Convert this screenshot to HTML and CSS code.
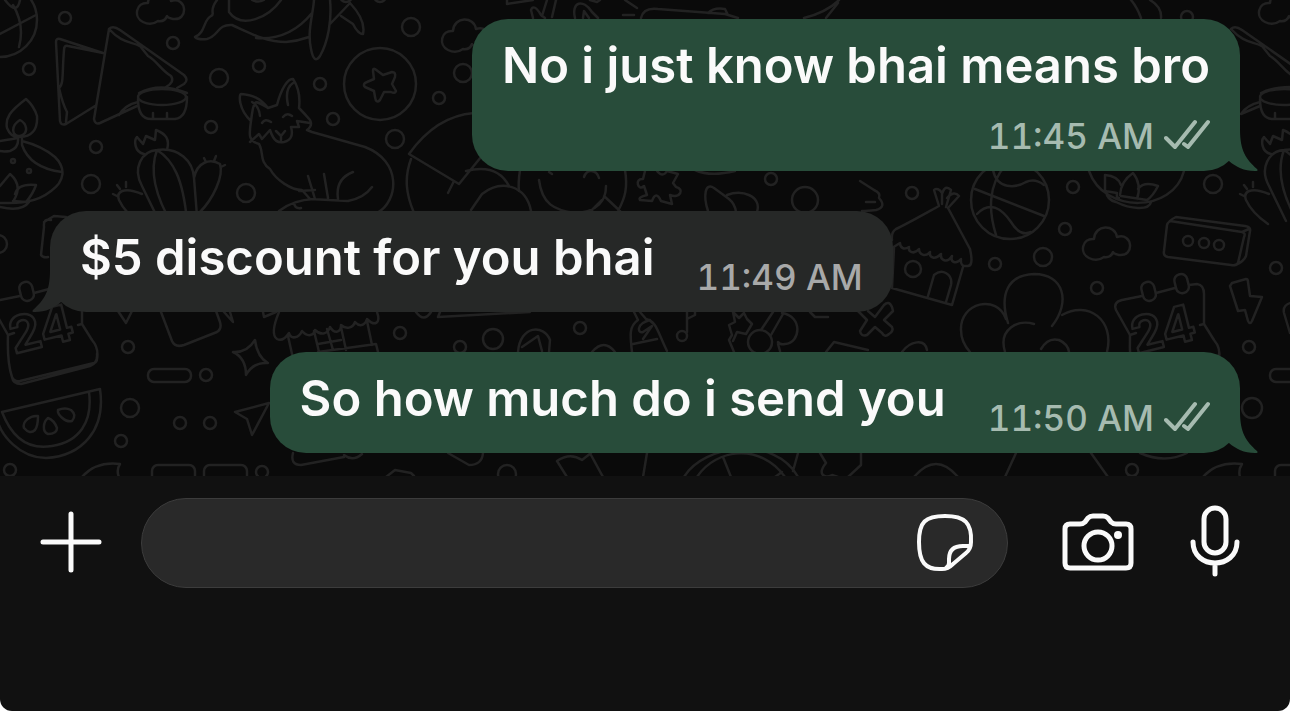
FILE: index.html
```html
<!DOCTYPE html>
<html lang="en">
<head>
    <meta charset="UTF-8">
    <meta name="viewport" content="width=device-width, initial-scale=1.0">
    <title>Chat</title>
    <link rel="stylesheet" href="styles.css">
</head>
<body>
    <div class="app">
        <main class="chat">
            <!-- Doodle wallpaper -->
            <svg class="wallpaper" viewBox="0 0 1290 476" preserveAspectRatio="xMidYMin slice" aria-hidden="true">
                <defs>
                    <g id="calendar">
                        <path d="M0 20Q-9 22-6 30L8 55L14 53M0 20L20 16M34 13L53 8M67 5L75 4Q82 5 82 14V44L92 60Q99 68 97 79Q97 82 94 83L20 101Q14 102 12 97Q7 82 8 55M82 44L78 45M12 97Q13 104 21 104L90 86Q98 83 97 74"/>
                        <rect x="20" y="2" width="13" height="19" rx="6" transform="rotate(-14 26 11)"/>
                        <rect x="53" y="-6" width="13" height="19" rx="6" transform="rotate(-14 60 3)"/>
                        <text x="14" y="74" transform="rotate(-14 14 74)">24</text>
                    </g>
                    <g id="cloud">
                        <path d="M11 11C12-4 32-4 34 9C50 4 52 29 36 27Q31 26 30 24Q28 30 21 29Q14 34 6 30C-4 25-1 10 11 11Z"/>
                    </g>
                    <g id="cactus">
                        <path d="M5 50C-5 32 5 15 20 14C42 11 56 25 57 42L60 80M20 14C12 35 18 60 36 90M20 14C36 24 46 42 50 85M5 50L22 85M57 42C60 26 73 22 83 28C87 40 76 63 63 76M7 18C-3 16-3 4 0 1L6 8L9 0L18 4L19-6C29-2 33 3 30 14M5 58C-14 50-21 56-18 64Q-12 77 4 88M-17 53L-20 49M-11 51V46M-20 60L-24 58M69 26L67 22M77 25L79 20M84 31L88 29"/>
                    </g>
                </defs>

                <circle cx="0" cy="20" r="37"/>
                <path d="M0 34L36 15M13 5Q25 25 19 47M5 0Q17 16 20 0"/>
                <use href="#cloud" x="137" y="-8"/>

                <!-- Napkins and bowl -->
                <path d="M103 53L60 39Q56 38 56 42L60 121Q61 126 66 124L95 106M103 53L68 46Q64 45 64 50C62 73 64 84 59 88Q63 105 67 112L66 122M109 29Q113 25 120 30L184 75Q189 80 184 84L177 88M109 29L94 119Q95 125 100 123L137 106M109 29C122 43 129 41 140 46L148 56C157 61 161 70 171 76Q175 82 166 87M119 115Q125 105 138 102"/>
                <ellipse cx="162" cy="97" rx="24" ry="8"/>
                <path d="M138 99C138 114 143 119 151 119H175C184 118 187 108 187 97M139 93Q160 82 187 93M153 113V118M167 113V118"/>

                <!-- Whale -->
                <path d="M217 0C208 12 216 14 211 16C203 20 206 32 195 37Q198 40 207 39C219 36 217 24 232 25C250 33 265 42 286 42Q298 41 309 37M229 0V12C242 30 269 17 281 0M256 38C281 40 299 29 312 13M314 0C313 15 307 31 311 49Q314 65 320 56C328 42 332 20 330 0M330 24L350 3Q366 20 363 34Q358 34 353 24L341 16"/>
                <path d="M252 0Q258 3 264 0"/>

                <!-- Star coin -->
                <circle cx="380" cy="84" r="36"/>
                <path d="M375 69L383 75L392 72Q396 72 395 77L392 84L396 91Q395 94 391 92L384 92L380 100Q376 104 375 97L374 91L365 87Q362 84 367 82L374 79L373 71Q373 68 375 69Z"/>

                <!-- Fox -->
                <path d="M268 108C255 101 254 96 251 121C238 109 239 94 241 94C253 95 260 98 268 108ZM268 108L277 105C281 89 288 78 293 79C299 88 300 100 299 108Q304 113 310 120Q313 126 307 130L312 132L365 147C402 161 399 201 377 213M251 121C249 135 248 141 259 144C264 152 259 162 270 169C276 180 291 190 302 190L310 199L348 201Q364 198 372 187M252 102Q259 106 260 116M288 105C286 96 287 87 293 83M250 142L259 134L262 139L270 130C274 142 278 143 284 142C292 140 293 134 291 127L299 127L297 121L310 123M276 131L281 136L285 131M281 136V140M262 123Q265 118 271 122M283 117Q287 112 292 116M308 176L315 199M324 174L328 198M353 172Q335 179 338 199M299 191L315 190M279 211Q293 200 314 199M294 203Q295 209 301 208"/>

                <!-- Lamp -->
                <path d="M26 99C10 111 5 118 7 128Q11 138 20 137C31 137 38 130 37 116Q34 106 26 99ZM20 120C10 126 12 137 20 136C30 133 26 123 20 120ZM0 141Q13 139 18 138Q19 148 10 151Q4 152 0 151M22 139V145Q30 168 62 172M22 141Q42 146 55 157C66 168 65 181 51 191C36 203 20 203 0 203M0 186L10 174Q23 185 14 200M15 194Q18 183 36 185Q33 194 26 202L13 201M29 202Q22 212 0 207"/>
                <circle cx="13" cy="161" r="2"/>
                <circle cx="29" cy="171" r="2"/>
                <use href="#cactus" x="137" y="136"/>

                <!-- Parasol, smiley, puzzle -->
                <path d="M409 154Q436 116 474 113M409 154L459 184L481 157M411 159C404 178 406 194 414 213M454 181L448 193M466 171Q497 163 509 186M471 210L482 194C501 179 526 185 531 211"/>
                <path d="M519 191Q518 183 520 170M625 170C628 188 625 198 618 211M539 180C542 204 554 210 575 213C598 212 606 200 606 186M549 172L552 174M584 177Q586 171 591 171Q597 171 599 178M604 196L620 211M592 210L602 200"/>
                <path d="M645 171L643 179C634 178 638 192 644 186L647 195Q638 197 640 200L652 201Q656 190 661 201L672 204L670 195C680 199 685 189 676 187L673 183L678 174L667 171Q663 178 657 171"/>
                <path d="M708 211C703 196 705 182 714 188L729 199Q735 204 736 212M727 195C742 189 762 196 757 212M695 170Q710 177 735 171"/>

                <!-- Objects along the top -->
                <path d="M507 0V4L533 0M533 18L531 10Q534 3 541 15L545 18M542 16L547 0M552 17L556 0M575 18C571 2 583-2 592 12L598 18M583 18L584 11L589 18M590 0L597 2L600 0M625 0L637 8M623 15H634M641 18C643 9 650 8 658 9L725 14L738 18M708 13Q714 7 725 9L728 15M804 18Q827 12 839 0M826 18L838 3"/>
                <use href="#cloud" x="442" y="20"/>
                <use href="#cloud" x="1259" y="-8"/>

                <!-- Gift and photo behind the grey bubble -->
                <path d="M51 220Q43 218 44 227L41 255Q43 258 48 257M44 222L54 216L66 217M118 311L126 323L132 311M161 312L172 341Q175 348 184 345L217 332Q222 329 220 322L216 311M224 312L233 322L230 312"/>
                <use href="#calendar" x="0" y="280"/>

                <!-- Hut roof -->
                <path d="M263 312L264 317L276 312M279 312C274 324 271 335 277 339Q283 342 289 333C291 340 299 338 302 331C308 338 314 335 315 330C321 336 328 334 330 327C335 335 341 332 341 325C346 330 353 328 355 322C361 329 366 323 367 319C375 327 381 323 377 312M288 336L292 354M314 331L319 352M327 329L333 350M341 327L346 350M367 321L372 345M318 344L341 340M318 352L376 344L378 352"/>

                <!-- Melon, spark, arrow -->
                <path d="M2 412L100 389C106 430 82 456 46 458C20 458 0 435-3 418M2 412C12 438 29 450 52 446C79 442 93 422 89 392"/>
                <path d="M38 416C30 415 22 422 24 428Q30 435 35 430Q38 426 38 416ZM48 418C43 422 42 432 48 434Q57 434 57 428Q54 420 48 418ZM58 410C57 414 65 423 72 421Q77 415 71 410Q65 407 58 410Z"/>
                <path d="M255 340Q257 357 268 363Q253 362 246 375Q246 358 233 352Q247 353 255 340Z"/>
                <path d="M269 403L252 435L247 419L235 412Z"/>
                <rect x="148" y="369" width="43" height="13" rx="6"/>
                <path d="M82 477Q96 461 120 464Q116 470 119 477M293 453Q290 465 301 465L344 457M344 455Q353 462 362 454M386 477L395 470L411 473L414 476"/>
                <rect x="152" y="465" width="43" height="20" rx="6"/>
                <rect x="204" y="465" width="43" height="20" rx="6"/>
                <path d="M448 453L469 465Q482 465 483 453M557 461Q570 452 582 460L591 453M557 461L567 477M591 455L603 477M647 453L643 477M684 477C704 444 775 435 798 477M697 477C716 448 761 443 785 477M723 457L731 477M798 453L793 471M820 453L826 463C817 474 824 479 832 475L838 477M775 477L782 472M848 477L861 465V453"/>

                <!-- Middle strip -->
                <path d="M416 312Q424 323 431 312M440 312L438 317L530 312M518 352C520 325 544 324 550 340L549 352M522 347L538 336L542 351M592 352Q604 338 615 352M634 312L638 320C629 326 630 335 632 352M640 312L646 319C657 322 657 331 667 351M633 344L657 339M650 320C635 324 638 334 643 332L652 326L643 339M687 312V332M687 319L695 315L695 309M733 312L739 318L744 313L747 319L752 324L746 334L737 332L733 341M733 312L735 322L729 325L732 335L729 340L734 352M761 330L773 312M771 335L783 314M782 313C803 316 801 343 785 344Q780 345 778 342M778 344L780 351M810 312L815 317H828"/>
                <circle cx="682" cy="336" r="5"/>
                <circle cx="760" cy="342" r="12"/>

                <!-- Hut -->
                <path d="M896 229C905 225 928 212 939 206L934 190Q938 187 942 193L942 204M942 194Q945 184 951 190L946 207M947 198Q954 190 959 196L948 208L970 249Q974 267 967 266Q960 267 961 259C956 265 950 262 952 256C947 264 940 260 941 254C935 260 929 258 930 252C925 258 919 254 919 249C914 255 908 252 909 247C904 250 900 248 900 243L892 248M892 240Q891 232 896 229M894 248L892 288L952 305L963 267M928 296L934 275C942 268 953 274 951 285L946 302"/>
                <circle cx="913" cy="269" r="8"/>
                <path d="M860 181L874 190Q881 193 879 198Q887 207 876 210Q866 211 862 211M866 202H875"/>

                <!-- Basketball -->
                <circle cx="1010" cy="200" r="39"/>
                <path d="M975 189L1044 216M1006 165C987 185 989 213 996 235M993 170C997 190 1016 188 1026 182Q1035 178 1044 185M977 214C990 200 1002 209 1011 222Q1020 237 1031 232"/>

                <!-- Lotus bowl -->
                <path d="M1089 171C1104 214 1173 213 1184 171M1119 198Q1116 198 1117 193L1105 191V175Q1118 176 1121 185M1120 195Q1121 181 1133 173Q1142 184 1137 199M1138 189Q1144 181 1158 186Q1153 196 1147 200L1121 196M1106 191Q1107 200 1116 202C1130 209 1149 211 1151 202"/>
                <use href="#cloud" x="1083" y="228"/>
                <path d="M1170 221L1242 232Q1246 233 1244 237L1238 263Q1236 266 1231 265L1168 257Q1163 256 1164 251L1167 225Q1168 221 1176 217L1245 226Q1251 227 1250 231L1246 256Q1244 261 1236 265M1242 232L1249 229"/>
                <circle cx="1188" cy="241" r="5"/>
                <circle cx="1204" cy="243" r="5"/>
                <circle cx="1219" cy="245" r="5"/>
                <use href="#cactus" x="1264" y="136"/>

                <!-- Napkin and bowl at the right edge -->
                <path d="M1231 29Q1235 25 1242 30L1292 65M1231 29C1244 43 1251 41 1262 46L1270 56C1279 61 1283 70 1293 76M1241 114Q1247 105 1260 102M1241 114L1260 106"/>
                <path d="M1131 0Q1137 7 1141 18M1150 0Q1162 7 1161 18"/>
                <ellipse cx="1284" cy="97" rx="24" ry="8"/>
                <path d="M1260 99C1260 114 1265 119 1273 119H1297M1261 93Q1272 87 1292 87M1275 113V118"/>

                <!-- Clover, bolt, cross -->
                <path d="M1008 323C999 294 1008 275 1034 274C1064 274 1071 302 1052 326M1006 319C997 294 960 302 961 330Q961 342 970 352M1062 315C1088 300 1115 320 1107 352M1034 324C1018 319 998 329 1005 352M1041 349Q1048 337 1059 340Q1068 344 1069 352"/>
                <use href="#calendar" x="1122" y="280"/>
                <path d="M1232 283L1246 279Q1248 279 1248 282L1250 296L1262 297L1252 321Q1250 325 1248 321L1245 310L1238 311L1230 286ZM1294 302Q1282 304 1284 313L1290 333"/>
                <path d="M868 311L875 317L884 305Q889 300 892 307L893 311L884 320L892 327Q894 331 889 334Q885 338 882 333L875 327L867 335Q861 337 860 331L867 320L858 311M826 352L834 342L868 350M902 352C910 341 925 338 927 350"/>
                <rect x="1270" y="369" width="43" height="13" rx="6"/>
                <path d="M1203 477Q1217 461 1242 464Q1238 470 1240 477M1005 477L1016 453M1091 453L1108 477M1140 453Q1165 464 1187 453M914 477Q936 451 958 477"/>
                <rect x="1275" y="465" width="43" height="20" rx="6"/>

                <!-- Dots -->
                <g>
                    <circle cx="65" cy="18" r="6"/><circle cx="29" cy="69" r="6"/><circle cx="173" cy="43" r="6"/>
                    <circle cx="219" cy="78" r="9"/><circle cx="259" cy="66" r="6"/><circle cx="320" cy="84" r="6"/>
                    <circle cx="411" cy="27" r="9"/><circle cx="333" cy="119" r="6"/><circle cx="395" cy="139" r="9"/>
                    <circle cx="211" cy="127" r="6"/><circle cx="96" cy="147" r="6"/><circle cx="91" cy="184" r="9"/>
                    <circle cx="246" cy="193" r="9"/><circle cx="463" cy="73" r="9"/><circle cx="439" cy="98" r="6"/>
                    <circle cx="-2" cy="244" r="9"/><circle cx="128" cy="347" r="6"/><circle cx="206" cy="375" r="6"/>
                    <circle cx="130" cy="408" r="9"/><circle cx="180" cy="423" r="6"/><circle cx="210" cy="423" r="6"/>
                    <circle cx="121" cy="441" r="6"/><circle cx="10" cy="470" r="6"/><circle cx="262" cy="472" r="6"/>
                    <circle cx="400" cy="333" r="6"/><circle cx="493" cy="339" r="10"/><circle cx="460" cy="347" r="6"/>
                    <circle cx="580" cy="328" r="6"/><circle cx="507" cy="474" r="9"/><circle cx="771" cy="179" r="6"/>
                    <circle cx="805" cy="200" r="13"/><circle cx="912" cy="193" r="6"/><circle cx="1073" cy="187" r="6"/>
                    <circle cx="1065" cy="229" r="6"/><circle cx="1043" cy="257" r="9"/><circle cx="995" cy="264" r="6"/>
                    <circle cx="1097" cy="288" r="6"/><circle cx="1213" cy="184" r="9"/><circle cx="1276" cy="268" r="6"/>
                    <circle cx="1249" cy="347" r="6"/><circle cx="1252" cy="408" r="10"/><circle cx="1132" cy="470" r="6"/>
                    <circle cx="346" cy="-4" r="6"/><circle cx="380" cy="-4" r="6"/><circle cx="1187" cy="17" r="6"/>
                </g>
            </svg>

            <div class="message sent stacked">
                <p class="text">No i just know bhai means bro</p>
                <div class="meta">
                    <time>11:45 AM</time>
                    <svg class="ticks" viewBox="0 0 46 34" role="img" aria-label="Delivered">
                        <path d="M2 19L11 28L31 3M20 25L24 28L44 3"/>
                    </svg>
                </div>
                <svg class="tail" viewBox="0 0 30 42" aria-hidden="true">
                    <path d="M0 0H11C11 22 17 30 28 40Q30 42 26 42C15 42 7 38 0 32Z"/>
                </svg>
            </div>

            <div class="message received">
                <p class="text">$5 discount for you bhai</p>
                <div class="meta">
                    <time>11:49 AM</time>
                </div>
                <svg class="tail" viewBox="0 0 30 42" aria-hidden="true">
                    <path d="M0 0H11C11 22 17 30 28 40Q30 42 26 42C15 42 7 38 0 32Z"/>
                </svg>
            </div>

            <div class="message sent">
                <p class="text">So how much do i send you</p>
                <div class="meta">
                    <time>11:50 AM</time>
                    <svg class="ticks" viewBox="0 0 46 34" role="img" aria-label="Delivered">
                        <path d="M2 19L11 28L31 3M20 25L24 28L44 3"/>
                    </svg>
                </div>
                <svg class="tail" viewBox="0 0 30 42" aria-hidden="true">
                    <path d="M0 0H11C11 22 17 30 28 40Q30 42 26 42C15 42 7 38 0 32Z"/>
                </svg>
            </div>
        </main>

        <!-- Composer -->
        <form class="composer">
            <button class="icon-btn" type="button" aria-label="Attach">
                <svg width="62" height="64" viewBox="0 0 62 64"><path d="M31 3V59M3 31H59"/></svg>
            </button>
            <div class="field">
                <input class="field-input" type="text" aria-label="Message">
                <button class="icon-btn" type="button" aria-label="Stickers">
                    <svg class="thin" width="58" height="60" viewBox="0 0 58 60"><path d="M55 29C56 10 49 3 29 3C9 3 3 9 3 29C3 49 9 57 26 56Q32 56 37 51L50 40Q55 36 55 29ZM54 33H47Q33 33 33 46V50Q33 53 30 55"/></svg>
                </button>
            </div>
            <button class="icon-btn" type="button" aria-label="Camera">
                <svg width="72" height="60" viewBox="0 0 72 60">
                    <path d="M8 11H18Q21 11 23 9L26 5Q28 3 31 3H41Q44 3 46 5L49 9Q51 11 54 11H64Q69 11 69 16V50Q69 55 64 55H8Q3 55 3 50V16Q3 11 8 11Z"/>
                    <circle cx="36" cy="33" r="14"/>
                    <circle class="solid" cx="56" cy="22" r="4"/>
                </svg>
            </button>
            <button class="icon-btn" type="button" aria-label="Record voice message">
                <svg width="50" height="76" viewBox="0 0 50 76"><rect x="14" y="3" width="22" height="45" rx="11"/><path d="M3 37C3 65 47 65 47 37M25 59V69"/></svg>
            </button>
        </form>
    </div>
</body>
</html>
```
FILE: styles.css
```css
:root {
    --sent: #284c3a;
    --received: #262827;
    --bar: #111111;
}

* {
    box-sizing: border-box;
}

body {
    margin: 0;
    background: #ffffff;
    font-family: Inter, "Liberation Sans", sans-serif;
}

.app {
    display: flex;
    flex-direction: column;
    min-height: 100vh;
    overflow: hidden;
    border-radius: 0 0 12px 12px;
    background: var(--bar);
}

.chat {
    position: relative;
    display: flex;
    flex-direction: column;
    gap: 40px;
    padding: 19px 50px 23px;
    overflow: hidden;
    background: #0a0a0a;
}

.wallpaper {
    position: absolute;
    inset: 0;
    width: 100%;
    height: 100%;
    fill: none;
    stroke: #222222;
    stroke-width: 2.5;
    stroke-linejoin: round;
    stroke-linecap: round;
}

.wallpaper text {
    font-size: 50px;
    font-weight: 700;
}

.message {
    position: relative;
    display: flex;
    align-items: flex-end;
    column-gap: 42px;
    padding: 17px 30px 15px;
    border-radius: 36px;
}

.sent {
    align-self: flex-end;
    background: var(--sent);
    color: #a6bbb0;
}

.received {
    align-self: flex-start;
    background: var(--received);
    color: #a8a9a9;
}

.stacked {
    flex-direction: column;
    row-gap: 11px;
}

.text {
    margin: 0;
    padding-bottom: 9px;
    color: #fafafa;
    font-size: 49px;
    font-weight: 600;
    line-height: 60px;
}

.meta {
    display: flex;
    align-items: center;
    gap: 10px;
    font-size: 35px;
    font-weight: 500;
    font-variant-numeric: tabular-nums;
    line-height: 40px;
}

.ticks {
    width: 46px;
    height: 34px;
    fill: none;
    stroke: currentColor;
    stroke-width: 4;
    stroke-linecap: round;
    stroke-linejoin: round;
}

.tail {
    position: absolute;
    right: -19px;
    bottom: 0;
    width: 30px;
    height: 42px;
    fill: var(--sent);
}

.received .tail {
    right: auto;
    left: -19px;
    fill: var(--received);
    transform: scaleX(-1);
}

.composer {
    display: flex;
    align-items: center;
    padding: 22px 50px 0 40px;
}

.icon-btn {
    display: flex;
    flex: none;
    padding: 0;
    border: 0;
    background: none;
}

.icon-btn svg {
    fill: none;
    stroke: #fafafa;
    stroke-width: 5;
    stroke-linecap: round;
    stroke-linejoin: round;
}

.icon-btn .thin {
    stroke-width: 4;
}

.icon-btn .solid {
    fill: #fafafa;
    stroke: none;
}

.field {
    display: flex;
    flex: 1;
    align-items: center;
    min-width: 0;
    height: 90px;
    margin: 0 54px 0 39px;
    padding: 0 33px 0 40px;
    border: 1px solid #3c3c3c;
    border-radius: 45px;
    background: #292929;
}

.field-input {
    flex: 1;
    min-width: 0;
    border: 0;
    outline: 0;
    background: none;
    color: #fafafa;
    font-family: inherit;
    font-size: 49px;
}

.composer > .icon-btn:last-child {
    margin-left: 56px;
}
```
